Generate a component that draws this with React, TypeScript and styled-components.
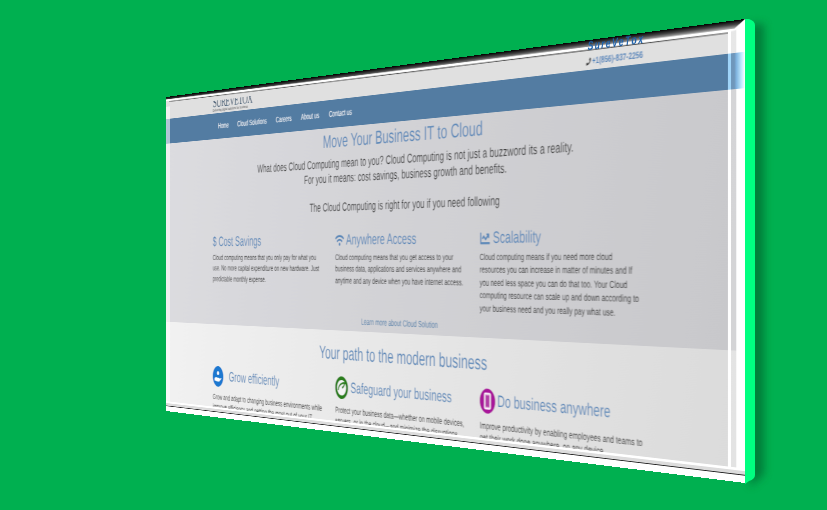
import React from "react";
import styled, { createGlobalStyle } from "styled-components";
import { FaChartLine, FaPhone, FaWifi } from "react-icons/fa";

const W = 1280;
const H = 510;

function quadMatrix(q: number[][]): string {
  const [[x0, y0], [x1, y1], [x2, y2], [x3, y3]] = q;
  const dx1 = x1 - x2, dx2 = x3 - x2, sx = x0 - x1 + x2 - x3;
  const dy1 = y1 - y2, dy2 = y3 - y2, sy = y0 - y1 + y2 - y3;
  const den = dx1 * dy2 - dx2 * dy1;
  const g = (sx * dy2 - dx2 * sy) / den;
  const h = (dx1 * sy - sx * dy1) / den;
  const a = x1 - x0 + g * x1, b = x3 - x0 + h * x3;
  const d = y1 - y0 + g * y1, e = y3 - y0 + h * y3;
  const m = [a / W, d / W, 0, g / W, b / H, e / H, 0, h / H, 0, 0, 1, 0, x0, y0, 0, 1];
  return `matrix3d(${m.join(",")})`;
}

const PANEL_TRANSFORM = quadMatrix([[166, 97], [745, 19], [745, 483], [166, 411]]);

const Global = createGlobalStyle`
  html, body { margin: 0; padding: 0; background: #00b050; }
  body { font-family: "Liberation Sans", Arial, sans-serif; text-rendering: geometricPrecision; }
`;

const Stage = styled.div`
  position: relative;
  width: 827px;
  height: 510px;
  overflow: hidden;
  background: #00b050;
`;

const SideEdge = styled.svg`
  position: absolute;
  inset: 0;
  width: 827px;
  height: 510px;
`;

const Panel = styled.div`
  position: relative;
  width: ${W}px;
  height: ${H}px;
  overflow: hidden;
  transform-origin: 0 0;
  transform: ${PANEL_TRANSFORM};
  background: #e0e0e0;
`;

const Content = styled.div`
  display: flex;
  flex-direction: column;
  width: ${W}px;
  height: ${H}px;
  filter: url(#softText);
`;

const Header = styled.header`
  display: flex;
  justify-content: space-between;
  height: 36px;
  padding: 10px 162px 0 147px;
  box-sizing: border-box;
  background: #e0e0e0;
`;

const Brand = styled.div`
  display: flex;
  flex-direction: column;
  color: #2b4a66;
`;

const BrandName = styled.div`
  font-family: "Liberation Serif", serif;
  font-size: 22px;
  line-height: 17px;
  letter-spacing: -1.6px;
`;

const BrandTag = styled.div`
  font-size: 6px;
  line-height: 6px;
  margin-top: 2px;
  color: #555;
`;

const Phone = styled.div`
  display: flex;
  align-items: center;
  gap: 2px;
  height: 14px;
  margin-top: 9px;
  font-size: 11px;
  font-weight: 700;
  color: #4a7fb8;
  svg { color: #333; width: 9px; height: 10px; }
`;

const Nav = styled.nav`
  display: flex;
  align-items: center;
  gap: 25px;
  height: 40px;
  padding-left: 163px;
  background: #527ba2;
  color: #fff;
  font-size: 12px;
`;

const CloudSection = styled.section`
  display: flex;
  flex-direction: column;
  height: 289px;
  background: linear-gradient(100deg, #dcdce0, #c8c8cb);
`;

const PageHeading = styled.h1<{ $top: number }>`
  margin: ${(p) => p.$top}px 6px 0 0;
  font-size: 25.8px;
  line-height: 30px;
  font-weight: 400;
  text-align: center;
  color: #5c88b8;
`;

const Lead = styled.p`
  margin: 7px 6px 0 0;
  font-size: 17px;
  line-height: 20.7px;
  text-align: center;
  color: #383838;
`;

const Columns = styled.div<{ $top: number }>`
  display: grid;
  grid-template-columns: 338px 329px 300px;
  margin-top: ${(p) => p.$top}px;
  padding-left: 147px;
`;

const ColumnTitle = styled.h3`
  display: flex;
  align-items: center;
  gap: 5px;
  margin: 0;
  height: 24px;
  font-size: 21px;
  font-weight: 400;
  color: #5c88b8;
  white-space: nowrap;
  svg { width: 22px; height: 20px; }
`;

const ColumnText = styled.p<{ $top: number; $leading: number }>`
  margin: ${(p) => p.$top}px 0 0;
  font-size: 11.9px;
  line-height: ${(p) => p.$leading}px;
  color: #363636;
  white-space: nowrap;
`;

const MoreLink = styled.a`
  margin: 0 6px 0 0;
  font-size: 12px;
  line-height: 16px;
  text-align: center;
  color: #4f7da8;
`;

const Spacer = styled.div<{ $h: number }>`
  height: ${(p) => p.$h}px;
  flex: none;
`;

const ModernSection = styled.section`
  flex: 1;
  display: flex;
  flex-direction: column;
  overflow: hidden;
  background: linear-gradient(100deg, #f2f2f2, #dbdbdb);
`;

const FeatureHead = styled.div<{ $gap: number }>`
  display: flex;
  align-items: center;
  gap: ${(p) => p.$gap}px;
  height: 32px;
  font-size: 21px;
  color: #5c88b8;
  white-space: nowrap;
`;

const Badge = styled.svg`
  width: 32px;
  height: 32px;
  flex: none;
`;

const FrameLeft = styled.div`
  position: absolute;
  left: 0;
  top: 0;
  bottom: 0;
  width: 12px;
  background: rgba(255, 255, 255, 0.55);
`;

const FrameRight = styled.div`
  position: absolute;
  right: 0;
  top: 0;
  bottom: 0;
  width: 26px;
  background: linear-gradient(
    to right,
    #fff 0 5px,
    rgba(255, 255, 255, 0.22) 5px 13px,
    #fff 13px
  );
`;

const NavSheen = styled.div`
  position: absolute;
  right: 0;
  top: 36px;
  width: 26px;
  height: 40px;
  background: linear-gradient(
    to right,
    #9fd4f8 0 5px,
    #6f97bb 5px 10px,
    #7fb4e0 13px,
    #c4ecff 21px,
    #fff 26px
  );
`;

const FrameBottom = styled.div`
  position: absolute;
  left: 0;
  right: 0;
  bottom: 0;
  height: 16px;
  background: linear-gradient(
    to bottom,
    #fff 0 3px,
    #dcdcdc 3px 7px,
    #222 7px 8px,
    #fff 8px
  );
`;

const TopBevel = styled.svg`
  position: absolute;
  left: 0;
  top: 0;
  width: ${W}px;
  height: 16px;
`;

const TopMark = styled.div`
  position: absolute;
  left: 1022px;
  top: 1px;
  width: 110px;
  font-size: 15px;
  line-height: 13px;
  font-weight: 700;
  font-style: italic;
  letter-spacing: 2.4px;
  color: #1f62ab;
  filter: blur(0.7px);
  white-space: nowrap;
`;

const GrowIcon = () => (
  <Badge viewBox="0 0 32 32">
    <circle cx="16" cy="16" r="16" fill="#1b78d0" />
    <path d="M6 19c3-2 5-2 8-1h5c2 0 2 2 0 2h-4 5l5-2c1 0 1 1 0 2l-6 4H12l-2-1H6z" fill="#fff" />
    <circle cx="16" cy="11" r="3" fill="#fff" />
  </Badge>
);

const ShieldIcon = () => (
  <Badge viewBox="0 0 32 32">
    <circle cx="16" cy="16" r="13.5" fill="#f4f4f4" stroke="#2b7d1e" strokeWidth="5" />
    <path d="M8 20c0-7 7-11 16-11-1 3-3 6-7 7" fill="none" stroke="#2b7d1e" strokeWidth="2.4" />
  </Badge>
);

const DeviceIcon = () => (
  <Badge viewBox="0 0 32 32">
    <circle cx="16" cy="16" r="16" fill="#a8149a" />
    <rect x="10" y="6" width="12" height="20" rx="2" fill="#e8c6e4" stroke="#fff" strokeWidth="1.5" />
    <rect x="12" y="8.5" width="8" height="15" fill="#b23aa6" />
  </Badge>
);

export default function App() {
  return (
    <Stage>
      <Global />
      <SideEdge viewBox="0 0 827 510">
        <defs>
          <filter id="edgeShadow" x="-200%" width="500%" y="-5%" height="110%">
            <feGaussianBlur stdDeviation="4" />
          </filter>
          <filter id="softText" x="0" y="0" width="100%" height="100%">
            <feGaussianBlur stdDeviation="0.9 0.45" />
          </filter>
        </defs>
        <path d="M750 24H764V474L750 487Z" fill="#006a32" opacity="0.75" filter="url(#edgeShadow)" />
        <path d="M745 19 L749 19 Q755 21 755 25 L755 475 Q755 479 749 481 L745 484Z" fill="#00ff80" />
      </SideEdge>
      <Panel>
        <Content>
          <Header>
            <Brand>
              <BrandName>SUREVETOX</BrandName>
              <BrandTag>Delivering digital solutions for business</BrandTag>
            </Brand>
            <Phone>
              <FaPhone />
              +1(856)-837-2256
            </Phone>
          </Header>
          <Nav>
            <span>Home</span>
            <span>Cloud Solutions</span>
            <span>Careers</span>
            <span>About us</span>
            <span>Contact us</span>
          </Nav>
          <CloudSection>
            <PageHeading $top={5}>Move Your Business IT to Cloud</PageHeading>
            <Lead>
              What does Cloud Computing mean to you? Cloud Computing is not just a buzzword its a reality.
              <br />
              For you it means: cost savings, business growth and benefits.
              <br />
              <br />
              The Cloud Computing is right for you if you need following
            </Lead>
            <Columns $top={24}>
              <div>
                <ColumnTitle>$ Cost Savings</ColumnTitle>
                <ColumnText $top={4} $leading={16.5}>
                  Cloud computing means that you only pay for what you
                  <br />
                  use. No more capital expenditure on new hardware. Just
                  <br />
                  predictable monthly expense.
                </ColumnText>
              </div>
              <div>
                <ColumnTitle>
                  <FaWifi />
                  Anywhere Access
                </ColumnTitle>
                <ColumnText $top={4} $leading={16.5}>
                  Cloud computing means that you get access to your
                  <br />
                  business data, applications and services anywhere and
                  <br />
                  anytime and any device when you have internet access.
                </ColumnText>
              </div>
              <div>
                <ColumnTitle>
                  <FaChartLine />
                  Scalability
                </ColumnTitle>
                <ColumnText $top={4} $leading={16.5}>
                  Cloud computing means if you need more cloud
                  <br />
                  resources you can increase in matter of minutes and If
                  <br />
                  you need less space you can do that too. Your Cloud
                  <br />
                  computing resource can scale up and down according to
                  <br />
                  your business need and you really pay what use.
                </ColumnText>
              </div>
            </Columns>
            <Spacer $h={8} />
            <MoreLink>Learn more about Cloud Solution</MoreLink>
          </CloudSection>
          <ModernSection>
            <PageHeading $top={18}>Your path to the modern business</PageHeading>
            <Columns $top={17}>
              <div>
                <FeatureHead $gap={16}>
                  <GrowIcon />
                  Grow efficiently
                </FeatureHead>
                <ColumnText $top={9} $leading={15}>
                  Grow and adapt to changing business environments while
                  <br />
                  improve efficiency and getting the most out of your IT
                </ColumnText>
              </div>
              <div>
                <FeatureHead $gap={6}>
                  <ShieldIcon />
                  Safeguard your business
                </FeatureHead>
                <ColumnText $top={9} $leading={15}>
                  Protect your business data—whether on mobile devices,
                  <br />
                  servers, or in the cloud—and minimize the disruptions
                </ColumnText>
              </div>
              <div>
                <FeatureHead $gap={4}>
                  <DeviceIcon />
                  Do business anywhere
                </FeatureHead>
                <ColumnText $top={9} $leading={15}>
                  Improve productivity by enabling employees and teams to
                  <br />
                  get their work done anywhere, on any device
                </ColumnText>
              </div>
            </Columns>
          </ModernSection>
        </Content>
        <FrameLeft />
        <FrameRight />
        <NavSheen />
        <FrameBottom />
        <TopBevel viewBox={`0 0 ${W} 16`}>
          <defs>
            <linearGradient id="bevel" x1="0" y1="0" x2="0" y2="10" gradientUnits="userSpaceOnUse">
              <stop offset="0" stopColor="#000" />
              <stop offset="0.45" stopColor="#444" />
              <stop offset="1" stopColor="#c8c8c8" />
            </linearGradient>
          </defs>
          <polygon points={`0,6 1254,13 1254,16 0,16`} fill="#e0e0e0" />
          <polygon points="0,3 1280,0 1266,11 1254,12 0,7" fill="#fff" />
          <polygon points="0,0 1280,0 1264,9 0,4" fill="url(#bevel)" />
          <line x1="10" y1="8" x2="1254" y2="13" stroke="#555" strokeWidth="1.2" />
        </TopBevel>
        <TopMark>SureVeTox</TopMark>
      </Panel>
    </Stage>
  );
}
